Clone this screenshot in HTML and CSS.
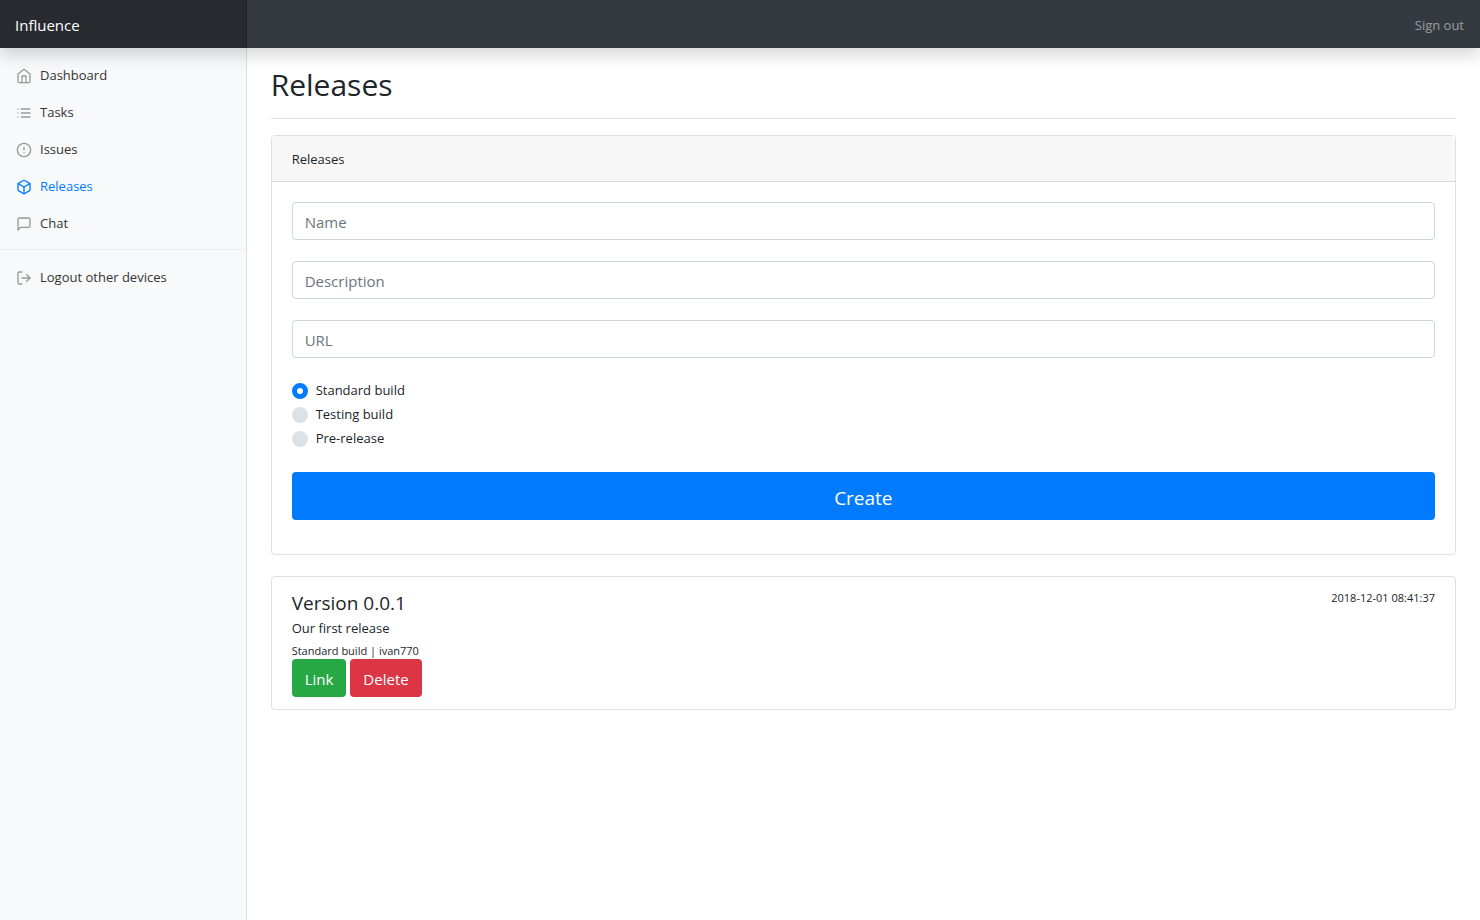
FILE: index.html
```
<!DOCTYPE html>
<html lang="en">
<head>
<meta charset="utf-8">
<meta name="viewport" content="width=device-width, initial-scale=1">
<title>Releases - Influence</title>
<link rel="stylesheet" href="styles.css">
</head>
<body>
<header class="topbar">
  <a class="brand" href="#">Influence</a>
  <a class="sign-out" href="#">Sign out</a>
</header>
<div class="layout">
  <nav class="sidebar" aria-label="Main">
    <ul class="menu">
      <li><a class="menu-link" href="#"><svg class="icon" viewBox="0 0 24 24"><path d="M3 9l9-7 9 7v11a2 2 0 0 1-2 2H5a2 2 0 0 1-2-2z"/><polyline points="9 22 9 12 15 12 15 22"/></svg>Dashboard</a></li>
      <li><a class="menu-link" href="#"><svg class="icon" viewBox="0 0 24 24"><path d="M8 6h13M8 12h13M8 18h13M3 6h.01M3 12h.01M3 18h.01"/></svg>Tasks</a></li>
      <li><a class="menu-link" href="#"><svg class="icon" viewBox="0 0 24 24"><circle cx="12" cy="12" r="10"/><path d="M12 8v4M12 16h.01"/></svg>Issues</a></li>
      <li><a class="menu-link active" href="#" aria-current="page"><svg class="icon" viewBox="0 0 24 24"><path d="M21 16V8a2 2 0 0 0-1-1.73l-7-4a2 2 0 0 0-2 0l-7 4A2 2 0 0 0 3 8v8a2 2 0 0 0 1 1.73l7 4a2 2 0 0 0 2 0l7-4A2 2 0 0 0 21 16z"/><polyline points="3.27 6.96 12 12.01 20.73 6.96"/><path d="M12 22.08V12"/></svg>Releases</a></li>
      <li><a class="menu-link" href="#"><svg class="icon" viewBox="0 0 24 24"><path d="M21 15a2 2 0 0 1-2 2H7l-4 4V5a2 2 0 0 1 2-2h14a2 2 0 0 1 2 2z"/></svg>Chat</a></li>
    </ul>
    <ul class="menu menu-secondary">
      <li><a class="menu-link" href="#"><svg class="icon" viewBox="0 0 24 24"><path d="M9 21H5a2 2 0 0 1-2-2V5a2 2 0 0 1 2-2h4"/><polyline points="16 17 21 12 16 7"/><path d="M21 12H9"/></svg>Logout other devices</a></li>
    </ul>
  </nav>
  <main class="content">
    <h1 class="page-title">Releases</h1>
    <section class="card">
      <div class="card-header">Releases</div>
      <form class="card-body">
        <input class="field" type="text" placeholder="Name" aria-label="Name">
        <input class="field" type="text" placeholder="Description" aria-label="Description">
        <input class="field" type="text" placeholder="URL" aria-label="URL">
        <div class="choices">
          <label class="choice"><input class="radio" type="radio" name="build" checked>Standard build</label>
          <label class="choice"><input class="radio" type="radio" name="build">Testing build</label>
          <label class="choice"><input class="radio" type="radio" name="build">Pre-release</label>
        </div>
        <button class="btn btn-create" type="button">Create</button>
      </form>
    </section>
    <article class="card release">
      <div class="release-head">
        <h2 class="release-title">Version 0.0.1</h2>
        <time class="small">2018-12-01 08:41:37</time>
      </div>
      <p class="release-text">Our first release</p>
      <div class="small">Standard build | ivan770</div>
      <div class="actions">
        <a class="btn btn-link" href="#">Link</a>
        <button class="btn btn-delete" type="button">Delete</button>
      </div>
    </article>
  </main>
</div>
</body>
</html>
```
FILE: styles.css
```
* {
  box-sizing: border-box;
}

body {
  margin: 0;
  min-height: 100vh;
  display: flex;
  flex-direction: column;
  background: #fff;
  color: #212529;
  font-family: "Segoe UI", "Open Sans", "Noto Sans", sans-serif;
  font-size: 13px;
  line-height: 21px;
}

a {
  text-decoration: none;
}

.topbar {
  position: relative;
  z-index: 1;
  display: flex;
  justify-content: space-between;
  background: #343a40;
  box-shadow: 0 8px 16px rgba(0, 0, 0, 0.15);
}

.brand {
  width: calc(100% / 6);
  padding: 13px 15px 11px;
  background: rgba(0, 0, 0, 0.25);
  box-shadow: inset -1px 0 0 rgba(0, 0, 0, 0.25);
  color: #fff;
  font-size: 15px;
  line-height: 24px;
}

.sign-out {
  padding: 15px 16px 12px;
  color: rgba(255, 255, 255, 0.5);
}

.layout {
  flex: 1;
  display: flex;
}

.sidebar {
  flex: none;
  width: calc(100% / 6);
  padding-top: 8px;
  background: #f8f9fa;
  box-shadow: inset -1px 0 0 rgba(0, 0, 0, 0.1);
}

.menu {
  margin: 0;
  padding: 0;
  list-style: none;
}

.menu-secondary {
  margin-top: 8px;
  padding-top: 8px;
  border-top: 1px solid #e9ecef;
}

.menu-link {
  display: flex;
  align-items: center;
  gap: 8px;
  padding: 9px 16px 7px;
  color: #333;
}

.icon {
  width: 16px;
  height: 16px;
  fill: none;
  stroke: #999;
  stroke-width: 2;
  stroke-linecap: round;
  stroke-linejoin: round;
}

.menu-link.active {
  color: #007bff;
}

.active .icon {
  stroke: currentColor;
}

.content {
  flex: 1;
  min-width: 0;
  padding: 18px 24px;
}

.page-title {
  margin: 0 0 16px;
  padding-bottom: 14px;
  border-bottom: 1px solid #dee2e6;
  font-size: 30px;
  font-weight: 400;
  line-height: 38px;
}

.card {
  margin-bottom: 21px;
  border: 1px solid #dfdfdf;
  border-radius: 4px;
}

.card-header {
  padding: 13px 20px 11px;
  border-bottom: 1px solid #d8d8d8;
  background: #f7f7f7;
}

.card-body {
  display: flex;
  flex-direction: column;
  gap: 21px;
  padding: 20px 20px 34px;
}

.field {
  width: 100%;
  height: 38px;
  padding: 8px 12px 6px;
  border: 1px solid #ced4da;
  border-radius: 4px;
  background: #fff;
  color: #495057;
  font: inherit;
  font-size: 15px;
  line-height: 24px;
}

.field::placeholder {
  color: #6c757d;
  opacity: 1;
}

.choice {
  display: flex;
  gap: 8px;
  padding: 1px 0 2px;
}

.radio {
  appearance: none;
  width: 16px;
  height: 16px;
  margin: 3px 0 0;
  border-radius: 50%;
  background: #dee2e6;
}

.radio:checked {
  border: 5px solid #007bff;
  background: #fff;
}

.btn {
  padding: 8px 13px 6px;
  border: 0;
  border-radius: 4px;
  color: #fff;
  font-family: inherit;
  font-size: 15px;
  line-height: 24px;
}

.btn-create {
  padding: 11px 16px 7px;
  background: #007bff;
  font-size: 19px;
  line-height: 30px;
}

.btn-link {
  background: #28a745;
}

.btn-delete {
  background: #dc3545;
}

.release {
  padding: 12px 20px;
}

.release-head {
  display: flex;
  justify-content: space-between;
  margin-bottom: 2px;
}

.release-title {
  margin: 0;
  padding-top: 2px;
  font-size: 19px;
  font-weight: 400;
  line-height: 25px;
}

.release-text {
  margin: 0 0 3px;
}

.small {
  font-size: 11px;
  line-height: 17px;
}

.actions {
  display: flex;
  gap: 4px;
}
```
